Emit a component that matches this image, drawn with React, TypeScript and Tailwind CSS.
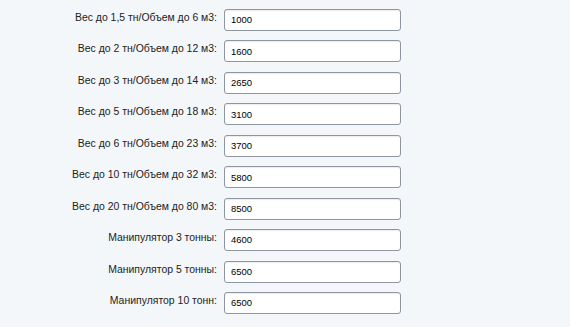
import React from "react";

const rows: [string, string][] = [
  ["Вес до 1,5 тн/Объем до 6 м3:", "1000"],
  ["Вес до 2 тн/Объем до 12 м3:", "1600"],
  ["Вес до 3 тн/Объем до 14 м3:", "2650"],
  ["Вес до 5 тн/Объем до 18 м3:", "3100"],
  ["Вес до 6 тн/Объем до 23 м3:", "3700"],
  ["Вес до 10 тн/Объем до 32 м3:", "5800"],
  ["Вес до 20 тн/Объем до 80 м3:", "8500"],
  ["Манипулятор 3 тонны:", "4600"],
  ["Манипулятор 5 тонны:", "6500"],
  ["Манипулятор 10 тонн:", "6500"],
];

export default function App() {
  return (
    <div
      className="w-[570px] h-[327px] bg-[#f4f7f9] pt-[9px] flex flex-col gap-[9.45px]"
      style={{ fontFamily: '"Liberation Sans", Arial, sans-serif' }}
    >
      {rows.map(([label, value]) => (
        <div key={label} className="flex h-[22px] items-start">
          <div className="w-[217px] text-right text-[10.45px] leading-[13px] text-[#222] pt-[2px]">
            {label}
          </div>
          <div className="ml-[7px] w-[177px] h-[22px] rounded-[3px] border border-[#8e96a1] bg-white shadow-[inset_0_1px_1px_rgba(0,0,0,0.08)] flex items-center pl-[6px] pt-[1px] text-[9.5px] text-black">
            {value}
          </div>
        </div>
      ))}
    </div>
  );
}
